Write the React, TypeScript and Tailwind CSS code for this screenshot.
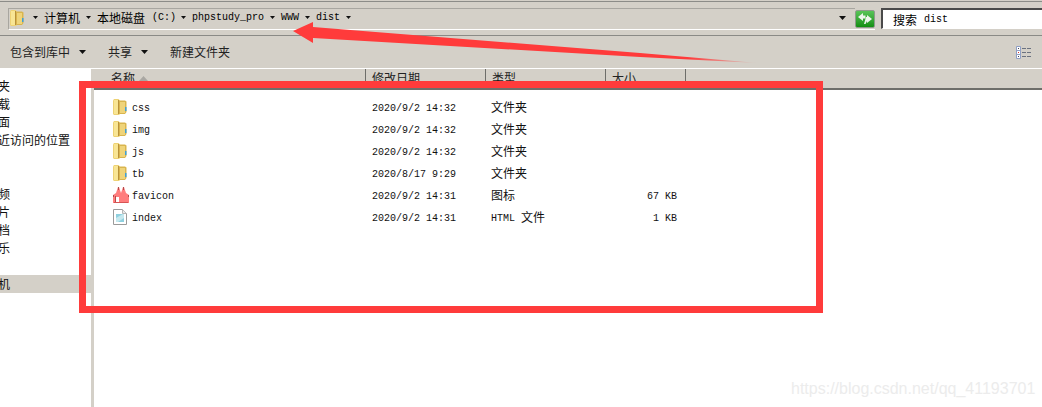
const cjk = "font-['Noto_Sans_CJK_SC',sans-serif] text-[12px] leading-[16px]"
const mono = "font-['Liberation_Mono',monospace] text-[10px] leading-[16px]"

const Caret = ({ className = "" }: { className?: string }) => (
  <svg width="7" height="4" viewBox="0 0 7 4" className={`shrink-0 ${className}`}>
    <path d="M0 0h7L3.5 4z" fill="#111" />
  </svg>
)

const SmallCaret = ({ className = "" }: { className?: string }) => (
  <svg width="5" height="3" viewBox="0 0 5 3" className={`shrink-0 ${className}`}>
    <path d="M0 0h5L2.5 3z" fill="#111" />
  </svg>
)

const Folder = () => (
  <svg width="14" height="16" viewBox="0 0 14 16" className="shrink-0">
    <path d="M0 1.5 1 0h4.5L7 1.5V15l-1 1H1l-1-1z" fill="#eed274" />
    <path d="M1 1h4v14H1z" fill="#f8e594" />
    <path d="M6 1.5h6l1.5 1V13L12 15H6z" fill="#d9b54e" />
    <path d="M7 3h5v11H7z" fill="#efd47a" />
    <path d="M12 8h1.5v4H12z" fill="#3f9fd8" />
    <path d="M5.5 1v14" stroke="#b8913a" strokeWidth="1" />
  </svg>
)

const FaviconIcon = () => (
  <svg width="16" height="16" viewBox="0 0 16 16" className="shrink-0">
    <path d="M0 8 3 6 5 0h1l2 6 2-6h1l2 6 3 2v8H0z" fill="#ff7d7d" />
    <path d="M3 10h3v5H3z" fill="#fff" />
    <path d="M2 9h1v6H2zM0 8h1v2H0zM15 8h1v2h-1zM5 0h1v3H5zM10 0h1v3h-1z" fill="#b34a4a" />
    <path d="M1 15h14v1H1z" fill="#d65555" />
  </svg>
)

const FileIcon = () => (
  <svg width="14" height="16" viewBox="0 0 14 16" className="shrink-0">
    <path d="M.5.5h9l4 4v11H.5z" fill="#fff" stroke="#9a9a9a" />
    <path d="M9.5.5v4h4" fill="#e8e8e8" stroke="#b5b5b5" />
    <path d="M3 5h7l1 1v7H3z" fill="#8fd0df" />
    <path d="M3 9l7-4 1 1v3l-6 4H3z" fill="#c6e8ee" />
  </svg>
)

const rows = [
  { name: "css", date: "2020/9/2 14:32", type: "文件夹", size: "", icon: <Folder /> },
  { name: "img", date: "2020/9/2 14:32", type: "文件夹", size: "", icon: <Folder /> },
  { name: "js", date: "2020/9/2 14:32", type: "文件夹", size: "", icon: <Folder /> },
  { name: "tb", date: "2020/8/17 9:29", type: "文件夹", size: "", icon: <Folder /> },
  { name: "favicon", date: "2020/9/2 14:31", type: "图标", size: "67 KB", icon: <FaviconIcon />, wide: true },
  { name: "index", date: "2020/9/2 14:31", type: "HTML 文件", size: "1 KB", icon: <FileIcon /> },
]

const sidebar = [
  { text: "收藏夹", indent: "ml-[-26px]" },
  { text: "下载", indent: "ml-[-14px]" },
  { text: "桌面", indent: "ml-[-14px]" },
  { text: "最近访问的位置", indent: "ml-[-14px]" },
  { text: "", indent: "" },
  { text: "库", indent: "ml-[-26px]" },
  { text: "视频", indent: "ml-[-14px]" },
  { text: "图片", indent: "ml-[-14px]" },
  { text: "文档", indent: "ml-[-14px]" },
  { text: "音乐", indent: "ml-[-14px]" },
  { text: "", indent: "" },
  { text: "计算机", indent: "ml-[-26px]", active: true },
]

const Column = ({ label, width, pad, children }: { label: string; width: string; pad: string; children?: React.ReactNode }) => (
  <div className={`flex h-full shrink-0 items-start gap-[4px] border-r border-[#6e6e6a] pt-[1px] ${width} ${pad} ${cjk} text-[#222]`}>
    {label}
    {children}
  </div>
)

const App = () => {
  return (
    <div className="relative flex h-[407px] w-[1042px] flex-col overflow-hidden whitespace-nowrap bg-[#d4d0c8]">
      <div className="h-[2px] shrink-0 border-b border-[#8c8c88] bg-[#d4d0c8]" />

      {/* address bar */}
      <div className="flex h-[34px] shrink-0 items-start border-b border-[#8a8a86] pt-[6px]">
        <div className="ml-[8px] flex h-[22px] w-[847px] items-center border-t border-l border-[#a8a6a0] border-b border-b-white pb-[3px] text-black">
          <div className="ml-[1px]"><Folder /></div>
          <SmallCaret className="ml-[9px]" />
          <span className={`ml-[6px] ${cjk}`}>计算机</span>
          <SmallCaret className="ml-[6px]" />
          <span className={`ml-[6px] ${cjk}`}>本地磁盘</span>
          <span className={`ml-[7px] ${mono}`}>(C:)</span>
          <SmallCaret className="ml-[5px]" />
          <span className={`ml-[6px] ${mono}`}>phpstudy_pro</span>
          <SmallCaret className="ml-[6px]" />
          <span className={`ml-[6px] ${mono}`}>WWW</span>
          <SmallCaret className="ml-[6px]" />
          <span className={`ml-[6px] ${mono}`}>dist</span>
          <SmallCaret className="ml-[6px]" />
          <Caret className="ml-[488px]" />
        </div>
        <div className="flex h-[22px] w-[20px] items-start border-b border-white pt-[2px]">
          <div className="flex h-[18px] w-[20px] items-center justify-center rounded-[2px] border border-[#8f9a8c] bg-gradient-to-b from-[#58c458] to-[#0f8f0f]">
            <svg width="14" height="12" viewBox="0 0 14 12">
              <path d="M0 4 5 0v2.5h2.5v3H5V8z" fill="#eef5ee" />
              <path d="M14 6 9 2v2H8L6 11h1.5L9 8v2z" fill="#eef5ee" />
            </svg>
          </div>
        </div>
        <div className="ml-[6px] flex h-[21px] flex-1 items-center border-t-2 border-l-2 border-[#4a4a4a] border-b border-b-white bg-white pl-[10px] pt-[1px] text-black">
          <span className={cjk}>搜索</span>
          <span className={`ml-[7px] ${mono}`}>dist</span>
        </div>
      </div>

      {/* toolbar */}
      <div className="flex h-[33px] shrink-0 items-center border-b border-white pl-[10px] text-[#222]">
        <span className={cjk}>包含到库中</span>
        <Caret className="ml-[9px]" />
        <span className={`ml-[22px] ${cjk}`}>共享</span>
        <Caret className="ml-[9px]" />
        <span className={`ml-[22px] ${cjk}`}>新建文件夹</span>
        <svg width="16" height="13" viewBox="0 0 16 13" className="ml-auto mr-[10px]">
          <path d="M.5.5h4v4h-4zM.5 4.5h4v4h-4zM.5 8.5h4v4h-4z" fill="#fff" stroke="#8f9fc5" />
          <path d="M2 2h1v1H2zM2 10h1v1H2z" fill="#445" />
          <path d="M2 6h1v1H2z" fill="#d33" />
          <path d="M6 2.5h4M11 2.5h4M6 6.5h4M11 6.5h4M6 10.5h4M11 10.5h4" stroke="#6b7280" />
        </svg>
      </div>

      <div className="flex min-h-0 flex-1">
        <aside className="w-[91px] shrink-0 overflow-hidden bg-white pt-[8px]">
          {sidebar.map((item, index) => (
            <div key={index} className={`flex h-[18px] items-center text-[#111] ${cjk} ${item.active ? "bg-[#d4d0c8]" : ""}`}>
              <div className={item.indent}>{item.text}</div>
            </div>
          ))}
        </aside>
        <div className="w-[3px] shrink-0 bg-[#d4d0c8]" />
        <main className="flex min-w-0 flex-1 flex-col bg-white">
          <div className="flex h-[21px] shrink-0 border-b-2 border-[#6e6e6a] bg-[#d4d0c8]">
            <Column label="名称" width="w-[272px]" pad="pl-[17px]">
              <svg width="9" height="5" viewBox="0 0 9 5" className="mt-[6px]">
                <path d="M4.5 0 9 5H0z" fill="#a9a7a2" />
              </svg>
            </Column>
            <Column label="修改日期" width="w-[120px]" pad="pl-[6px]" />
            <Column label="类型" width="w-[120px]" pad="pl-[6px]" />
            <Column label="大小" width="w-[80px]" pad="pl-[6px]" />
          </div>
          <div className="pt-[6px]">
            {rows.map((row) => (
              <div key={row.name} className="grid h-[22px] grid-cols-[278px_119px_100px_86px] items-center text-[#111]">
                <div className={`flex items-center pl-[19px] ${mono}`}>
                  {row.icon}
                  <span className={`pt-[4px] ${row.wide ? "ml-[3px]" : "ml-[5px]"}`}>{row.name}</span>
                </div>
                <div className={`pt-[4px] ${mono}`}>{row.date}</div>
                <div className={row.type.startsWith("HTML") ? "flex items-center" : cjk}>
                  {row.type.startsWith("HTML") ? (
                    <>
                      <span className={`pt-[4px] ${mono} whitespace-pre`}>HTML </span>
                      <span className={cjk}>文件</span>
                    </>
                  ) : (
                    row.type
                  )}
                </div>
                <div className={`pt-[4px] text-right ${mono}`}>{row.size}</div>
              </div>
            ))}
          </div>
        </main>
      </div>

      {/* annotations drawn on top of the screenshot */}
      <div className="absolute left-[79px] top-[81px] h-[232px] w-[744px] border-[7px] border-[#ff3b3b]" />
      <svg width="1042" height="407" viewBox="0 0 1042 407" className="pointer-events-none absolute left-0 top-0">
        <defs>
          <linearGradient id="tail" x1="293" y1="0" x2="758" y2="0" gradientUnits="userSpaceOnUse">
            <stop offset="0.85" stopColor="#ff3b3b" />
            <stop offset="1" stopColor="#ff3b3b" stopOpacity="0" />
          </linearGradient>
        </defs>
        <path d="M293 31 313 22 313 27 640 53 758 63 640 57 313 38 313 43Z" fill="url(#tail)" />
      </svg>
      <div className="absolute left-[791px] top-[380px] font-['Liberation_Sans',sans-serif] text-[16px] leading-[18px] text-[#ececec]">
        https://blog.csdn.net/qq_41193701
      </div>
    </div>
  )
}

export default App
